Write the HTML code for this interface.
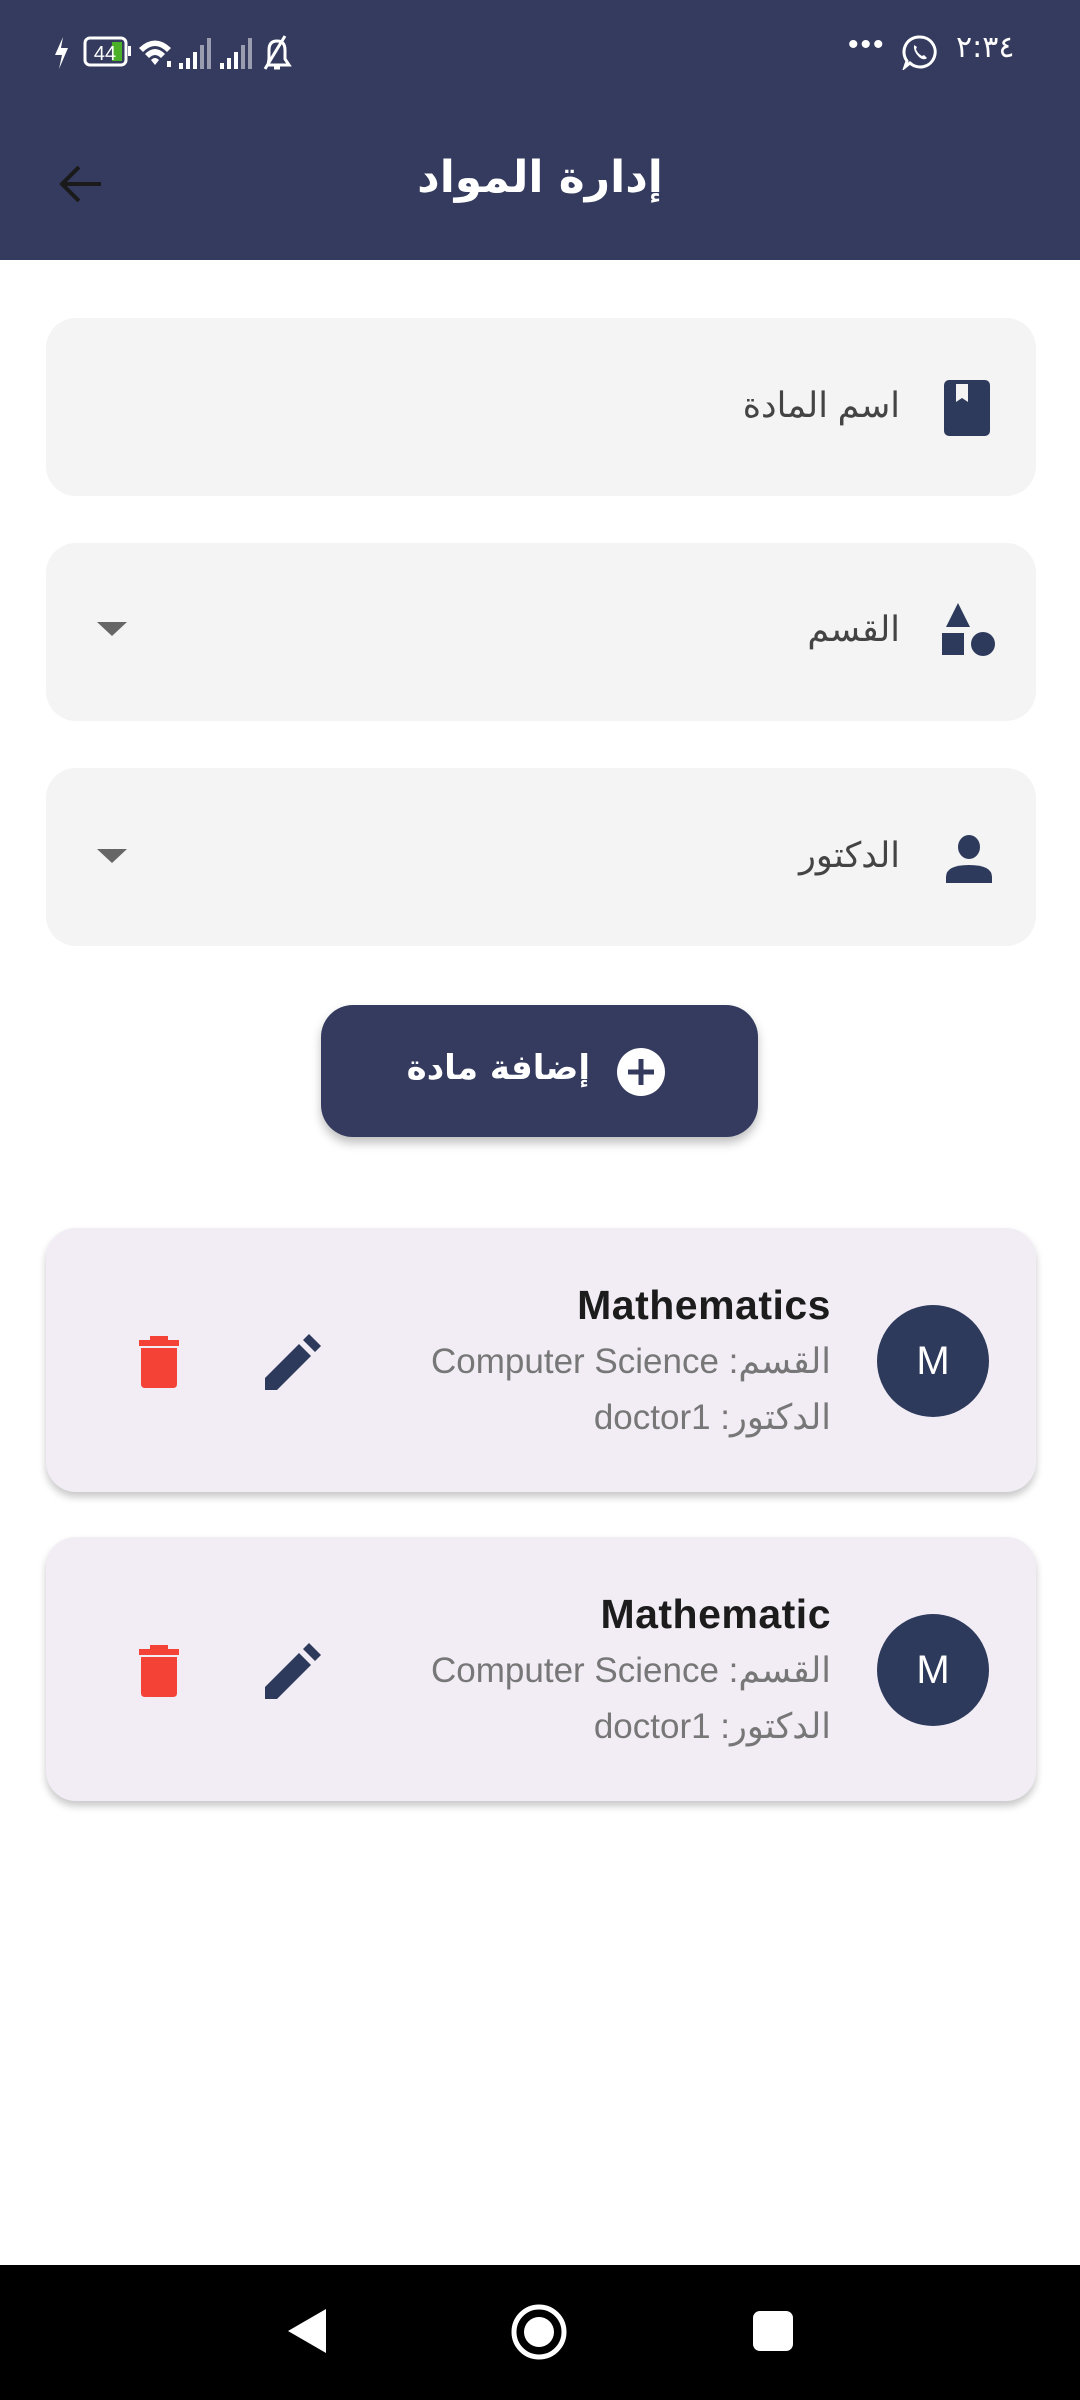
<!DOCTYPE html>
<html><head><meta charset="utf-8"><style>
*{margin:0;padding:0;box-sizing:border-box}
body{width:1080px;height:2400px;background:#fff;position:relative;overflow:hidden;font-family:"Liberation Sans","Noto Sans CJK SC",sans-serif}
.abs{position:absolute}
.bar{left:0;top:0;width:1080px;height:260px;background:#343b5e}
.field{left:46px;width:990px;height:178px;background:#f4f4f4;border-radius:30px}
.ftxt{right:180px;font-size:35px;color:#444;direction:rtl;line-height:40px}
.card{left:46px;width:990px;height:264px;background:#f2edf5;border-radius:30px;box-shadow:0 5px 8px rgba(0,0,0,.22)}
.av{width:112px;height:112px;border-radius:50%;background:#2e3a5c;color:#fff;font-size:40px;text-align:center;line-height:112px}
.t1{right:249px;font-size:41px;font-weight:bold;color:#1c1c1c;letter-spacing:.5px;white-space:nowrap}
.t2{right:249px;font-size:35px;color:#777;direction:rtl;white-space:nowrap}
</style></head><body>
<div class="abs bar"></div>
<!-- status bar -->
<svg class="abs" style="left:55px;top:33px" width="340" height="42" viewBox="0 0 340 42">
<path d="M8 4 L0 22 L7 22 L4 36 L13 15 L6 15 Z" fill="#fff"/>
<rect x="30" y="5" width="41" height="27" rx="5" fill="none" stroke="#fff" stroke-width="3"/>
<rect x="73" y="13" width="3" height="10" fill="#fff"/>
<rect x="57" y="9" width="10" height="19" fill="#4caf28"/>
<text x="50" y="27" font-size="20" fill="#fff" text-anchor="middle" font-family="Liberation Sans">44</text>
<path d="M84 15 Q100 0 116 15 L112 19 Q100 7 88 19 Z M90 21 Q100 11 110 21 L106 25 Q100 19 94 25 Z M96 27 Q100 23 104 27 L100 32 Z" fill="#fff"/>
<rect x="112" y="28" width="4" height="6" fill="#fff"/>
<g fill="#fff"><rect x="124" y="30" width="4" height="6"/><rect x="131" y="25" width="4" height="11"/><rect x="138" y="19" width="4" height="17"/><rect x="145" y="12" width="4" height="24" opacity=".5"/><rect x="152" y="5" width="4" height="31" opacity=".5"/></g>
<g fill="#fff"><rect x="165" y="30" width="4" height="6"/><rect x="172" y="25" width="4" height="11"/><rect x="179" y="19" width="4" height="17"/><rect x="186" y="12" width="4" height="24" opacity=".5"/><rect x="193" y="5" width="4" height="31" opacity=".5"/></g>
<path d="M213 32 L234 32 L230 26 L230 17 Q230 8 222 8 Q214 8 214 17 L214 26 Z M219 35 L225 35 M230 3 L210 36" fill="none" stroke="#fff" stroke-width="3"/>
</svg>
<div class="abs" style="left:848px;top:28px;color:#fff;font-size:30px;letter-spacing:2px">•••</div>
<svg class="abs" style="left:902px;top:34px" width="36" height="36" viewBox="0 0 36 36"><path d="M18 3 A15 15 0 1 1 8 29 L3 33 L5 27 A15 15 0 0 1 18 3 Z" fill="none" stroke="#fff" stroke-width="3"/><path d="M12 11 Q11 17 17 23 Q22 27 25 24 L22 21 L20 22 Q15 19 14 15 L15 13 Z" fill="#fff"/></svg>
<div class="abs" style="left:956px;top:30px;color:#fff;font-size:30px;font-family:'DejaVu Sans',sans-serif">٢:٣٤</div>
<!-- app bar -->
<svg class="abs" style="left:55px;top:160px" width="50" height="50" viewBox="0 0 50 50"><path d="M46 24 L8 24 M24 7 L7 24 L24 41" fill="none" stroke="#1a1a1a" stroke-width="4"/></svg>
<div class="abs" style="left:0;width:1080px;top:152px;text-align:center;color:#fff;font-size:44px;font-weight:bold;font-family:'DejaVu Sans','Noto Sans CJK SC',sans-serif;direction:rtl">إدارة المواد</div>
<!-- fields -->
<div class="abs field" style="top:318px"></div>
<div class="abs ftxt" style="top:386px">اسم المادة</div>
<svg class="abs" style="left:944px;top:380px" width="48" height="56" viewBox="0 0 48 56"><rect x="0" y="0" width="46" height="56" rx="5" fill="#2e3a5c"/><path d="M12 4 L24 4 L24 22 L18 18 L12 22 Z" fill="#f4f4f4"/></svg>
<div class="abs field" style="top:543px"></div>
<div class="abs ftxt" style="top:610px">القسم</div>
<svg class="abs" style="left:940px;top:603px" width="60" height="60" viewBox="0 0 60 60"><path d="M18 0 L30 24 L6 24 Z" fill="#2e3a5c"/><rect x="2" y="30" width="22" height="22" fill="#2e3a5c"/><circle cx="43" cy="41" r="12" fill="#2e3a5c"/></svg>
<svg class="abs" style="left:97px;top:622px" width="30" height="16"><path d="M0 0 L30 0 L15 14 Z" fill="#666"/></svg>
<div class="abs field" style="top:768px"></div>
<div class="abs ftxt" style="top:836px">الدكتور</div>
<svg class="abs" style="left:944px;top:835px" width="50" height="50" viewBox="0 0 50 50"><ellipse cx="25" cy="12" rx="11" ry="12" fill="#2e3a5c"/><path d="M2 48 L2 42 Q2 30 25 30 Q48 30 48 42 L48 48 Z" fill="#2e3a5c"/></svg>
<svg class="abs" style="left:97px;top:849px" width="30" height="16"><path d="M0 0 L30 0 L15 14 Z" fill="#666"/></svg>
<!-- button -->
<div class="abs" style="left:321px;top:1005px;width:437px;height:132px;background:#343b5e;border-radius:32px;box-shadow:0 6px 10px rgba(0,0,0,.25)"></div>
<div class="abs" style="left:380px;top:1048px;width:210px;text-align:right;color:#fff;font-size:34px;font-weight:bold;font-family:'DejaVu Sans',sans-serif;direction:rtl;white-space:nowrap">إضافة مادة</div>
<svg class="abs" style="left:616px;top:1047px" width="50" height="50" viewBox="0 0 50 50"><circle cx="25" cy="25" r="24" fill="#fff"/><path d="M25 12 L25 38 M12 25 L38 25" stroke="#343b5e" stroke-width="5"/></svg>
<!-- cards -->
<div class="abs card" style="top:1228px"></div>
<div class="abs av" style="left:877px;top:1305px">M</div>
<div class="abs t1" style="top:1282px">Mathematics</div>
<div class="abs t2" style="top:1342px">القسم: Computer Science</div>
<div class="abs t2" style="top:1398px">الدكتور: doctor1</div>
<svg class="abs" style="left:138px;top:1336px" width="42" height="52" viewBox="0 0 42 52"><rect x="12" y="0" width="18" height="5" fill="#f44336"/><rect x="1" y="4" width="40" height="6" fill="#f44336"/><path d="M3 12 L39 12 L39 48 Q39 52 35 52 L7 52 Q3 52 3 48 Z" fill="#f44336"/></svg>
<svg class="abs" style="left:265px;top:1334px" width="56" height="56" viewBox="0 0 56 56"><path d="M0 56 L0 44 L34 10 L46 22 L12 56 Z M38 6 L44 0 L56 12 L50 18 Z" fill="#2e3a5c"/></svg>
<div class="abs card" style="top:1537px"></div>
<div class="abs av" style="left:877px;top:1614px">M</div>
<div class="abs t1" style="top:1591px">Mathematic</div>
<div class="abs t2" style="top:1651px">القسم: Computer Science</div>
<div class="abs t2" style="top:1707px">الدكتور: doctor1</div>
<svg class="abs" style="left:138px;top:1645px" width="42" height="52" viewBox="0 0 42 52"><rect x="12" y="0" width="18" height="5" fill="#f44336"/><rect x="1" y="4" width="40" height="6" fill="#f44336"/><path d="M3 12 L39 12 L39 48 Q39 52 35 52 L7 52 Q3 52 3 48 Z" fill="#f44336"/></svg>
<svg class="abs" style="left:265px;top:1643px" width="56" height="56" viewBox="0 0 56 56"><path d="M0 56 L0 44 L34 10 L46 22 L12 56 Z M38 6 L44 0 L56 12 L50 18 Z" fill="#2e3a5c"/></svg>
<!-- nav bar -->
<div class="abs" style="left:0;top:2265px;width:1080px;height:135px;background:#000"></div>
<svg class="abs" style="left:286px;top:2307px" width="44" height="48"><path d="M40 2 L40 46 L2 24 Z" fill="#fff"/></svg>
<svg class="abs" style="left:510px;top:2303px" width="58" height="58"><circle cx="29" cy="29" r="25" fill="none" stroke="#fff" stroke-width="5"/><circle cx="29" cy="29" r="15" fill="#fff"/></svg>
<svg class="abs" style="left:753px;top:2311px" width="40" height="40"><rect x="0" y="0" width="40" height="40" rx="7" fill="#fff"/></svg>
</body></html>
